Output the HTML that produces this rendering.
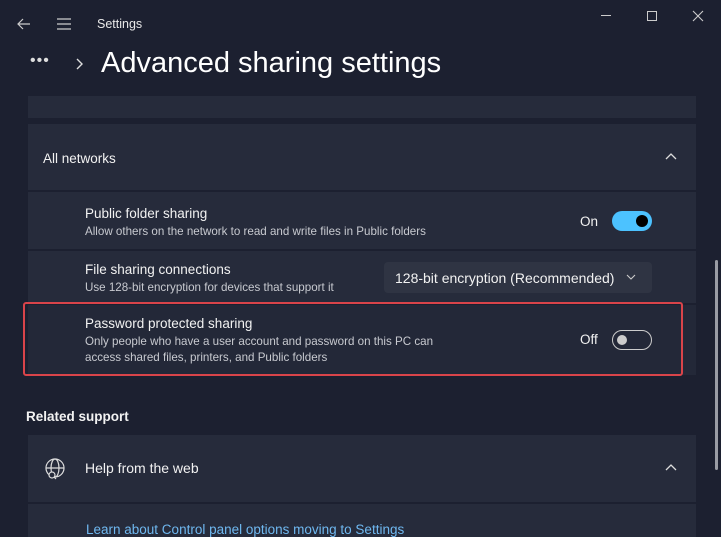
<!DOCTYPE html>
<html><head><meta charset="utf-8"><style>
*{margin:0;padding:0;box-sizing:border-box}
html,body{width:721px;height:537px;overflow:hidden}
body{background:#1c2030;font-family:"Liberation Sans",sans-serif;color:#fff;position:relative}
.a{position:absolute}
.card{position:absolute;left:28px;width:668px;background:#262b3b}
.t{font-size:13.5px;color:#f2f2f2}
.s{font-size:11.6px;color:#c8cad0;line-height:16px}
</style></head><body>
<svg class="a" style="left:16px;top:16px" width="16" height="16" viewBox="0 0 16 16"><path d="M14 8H2M7 3L2 8l5 5" stroke="#ccc" fill="none" stroke-width="1.2"/></svg>
<svg class="a" style="left:56px;top:17px" width="16" height="14" viewBox="0 0 16 14"><path d="M1 2h14M1 7h14M1 12h14" stroke="#ccc" stroke-width="1.2"/></svg>
<div class="a" style="left:97px;top:17px;font-size:12.5px;color:#e8e8e8">Settings</div>
<div class="a" style="left:601px;top:15px;width:10px;height:1px;background:#ccc"></div>
<div class="a" style="left:647px;top:11px;width:10px;height:10px;border:1px solid #ccc"></div>
<svg class="a" style="left:692px;top:10px" width="12" height="12" viewBox="0 0 12 12"><path d="M1 1l10 10M11 1L1 11" stroke="#ccc" stroke-width="1.1"/></svg>
<div class="a" style="left:30px;top:52px;font-size:16px;color:#ddd;letter-spacing:1px">•••</div>
<svg class="a" style="left:74px;top:57px" width="10" height="14" viewBox="0 0 10 14"><path d="M3 2l5 5-5 5" stroke="#ddd" fill="none" stroke-width="1.4"/></svg>
<div class="a" style="left:101px;top:47px;font-size:29px;color:#fff">Advanced sharing settings</div>
<div class="card" style="top:96px;height:22px"></div>
<div class="card" style="top:124px;height:66px"></div>
<div class="a t" style="left:43px;top:151px">All networks</div>
<svg class="a" style="left:665px;top:152px" width="12" height="8" viewBox="0 0 12 8"><path d="M1 7l5-5 5 5" stroke="#ddd" fill="none" stroke-width="1.3"/></svg>
<div class="card" style="top:192px;height:57px"></div>
<div class="a t" style="left:85px;top:206px">Public folder sharing</div>
<div class="a s" style="left:85px;top:224px">Allow others on the network to read and write files in Public folders</div>
<div class="a t" style="left:580px;top:214px">On</div>
<div class="a" style="left:612px;top:211px;width:40px;height:20px;border-radius:10px;background:#4cc2ff"></div>
<div class="a" style="left:636px;top:215px;width:12px;height:12px;border-radius:6px;background:#000"></div>
<div class="card" style="top:251px;height:52px"></div>
<div class="a t" style="left:85px;top:262px">File sharing connections</div>
<div class="a s" style="left:85px;top:280px">Use 128-bit encryption for devices that support it</div>
<div class="a" style="left:384px;top:262px;width:268px;height:31px;background:#2f3443;border-radius:4px"></div>
<div class="a t" style="left:395px;top:270px;font-size:14px">128-bit encryption (Recommended)</div>
<svg class="a" style="left:626px;top:274px" width="10" height="6" viewBox="0 0 10 6"><path d="M1 1l4 4 4-4" stroke="#ccc" fill="none" stroke-width="1.1"/></svg>
<div class="card" style="top:305px;height:70px;background:#232838"></div>
<div class="a" style="left:23px;top:302px;width:660px;height:74px;border:2.5px solid #d9444a;border-radius:3px"></div>
<div class="a t" style="left:85px;top:316px">Password protected sharing</div>
<div class="a s" style="left:85px;top:334px">Only people who have a user account and password on this PC can<br>access shared files, printers, and Public folders</div>
<div class="a t" style="left:580px;top:332px">Off</div>
<div class="a" style="left:612px;top:330px;width:40px;height:20px;border-radius:10px;border:1px solid #ccc"></div>
<div class="a" style="left:617px;top:335px;width:10px;height:10px;border-radius:5px;background:#ccc"></div>
<div class="a" style="left:26px;top:409px;font-size:13.5px;font-weight:bold;color:#f2f2f2">Related support</div>
<div class="card" style="top:435px;height:67px"></div>
<svg class="a" style="left:44px;top:458px" width="22" height="22" viewBox="0 0 22 22" fill="none" stroke="#ddd" stroke-width="1.2"><circle cx="11" cy="10" r="9"/><ellipse cx="11" cy="10" rx="4" ry="9"/><path d="M2 10h18"/><circle cx="8" cy="17" r="3" fill="#262b3b"/><path d="M10 19l2 2"/></svg>
<div class="a t" style="left:85px;top:460px;font-size:14px">Help from the web</div>
<svg class="a" style="left:665px;top:463px" width="12" height="8" viewBox="0 0 12 8"><path d="M1 7l5-5 5 5" stroke="#ddd" fill="none" stroke-width="1.3"/></svg>
<div class="card" style="top:504px;height:40px"></div>
<div class="a" style="left:86px;top:522px;font-size:13.5px;color:#6fb8f0">Learn about Control panel options moving to Settings</div>
<div class="a" style="left:715px;top:260px;width:3px;height:210px;background:#9a9ca4;border-radius:2px"></div>
</body></html>
